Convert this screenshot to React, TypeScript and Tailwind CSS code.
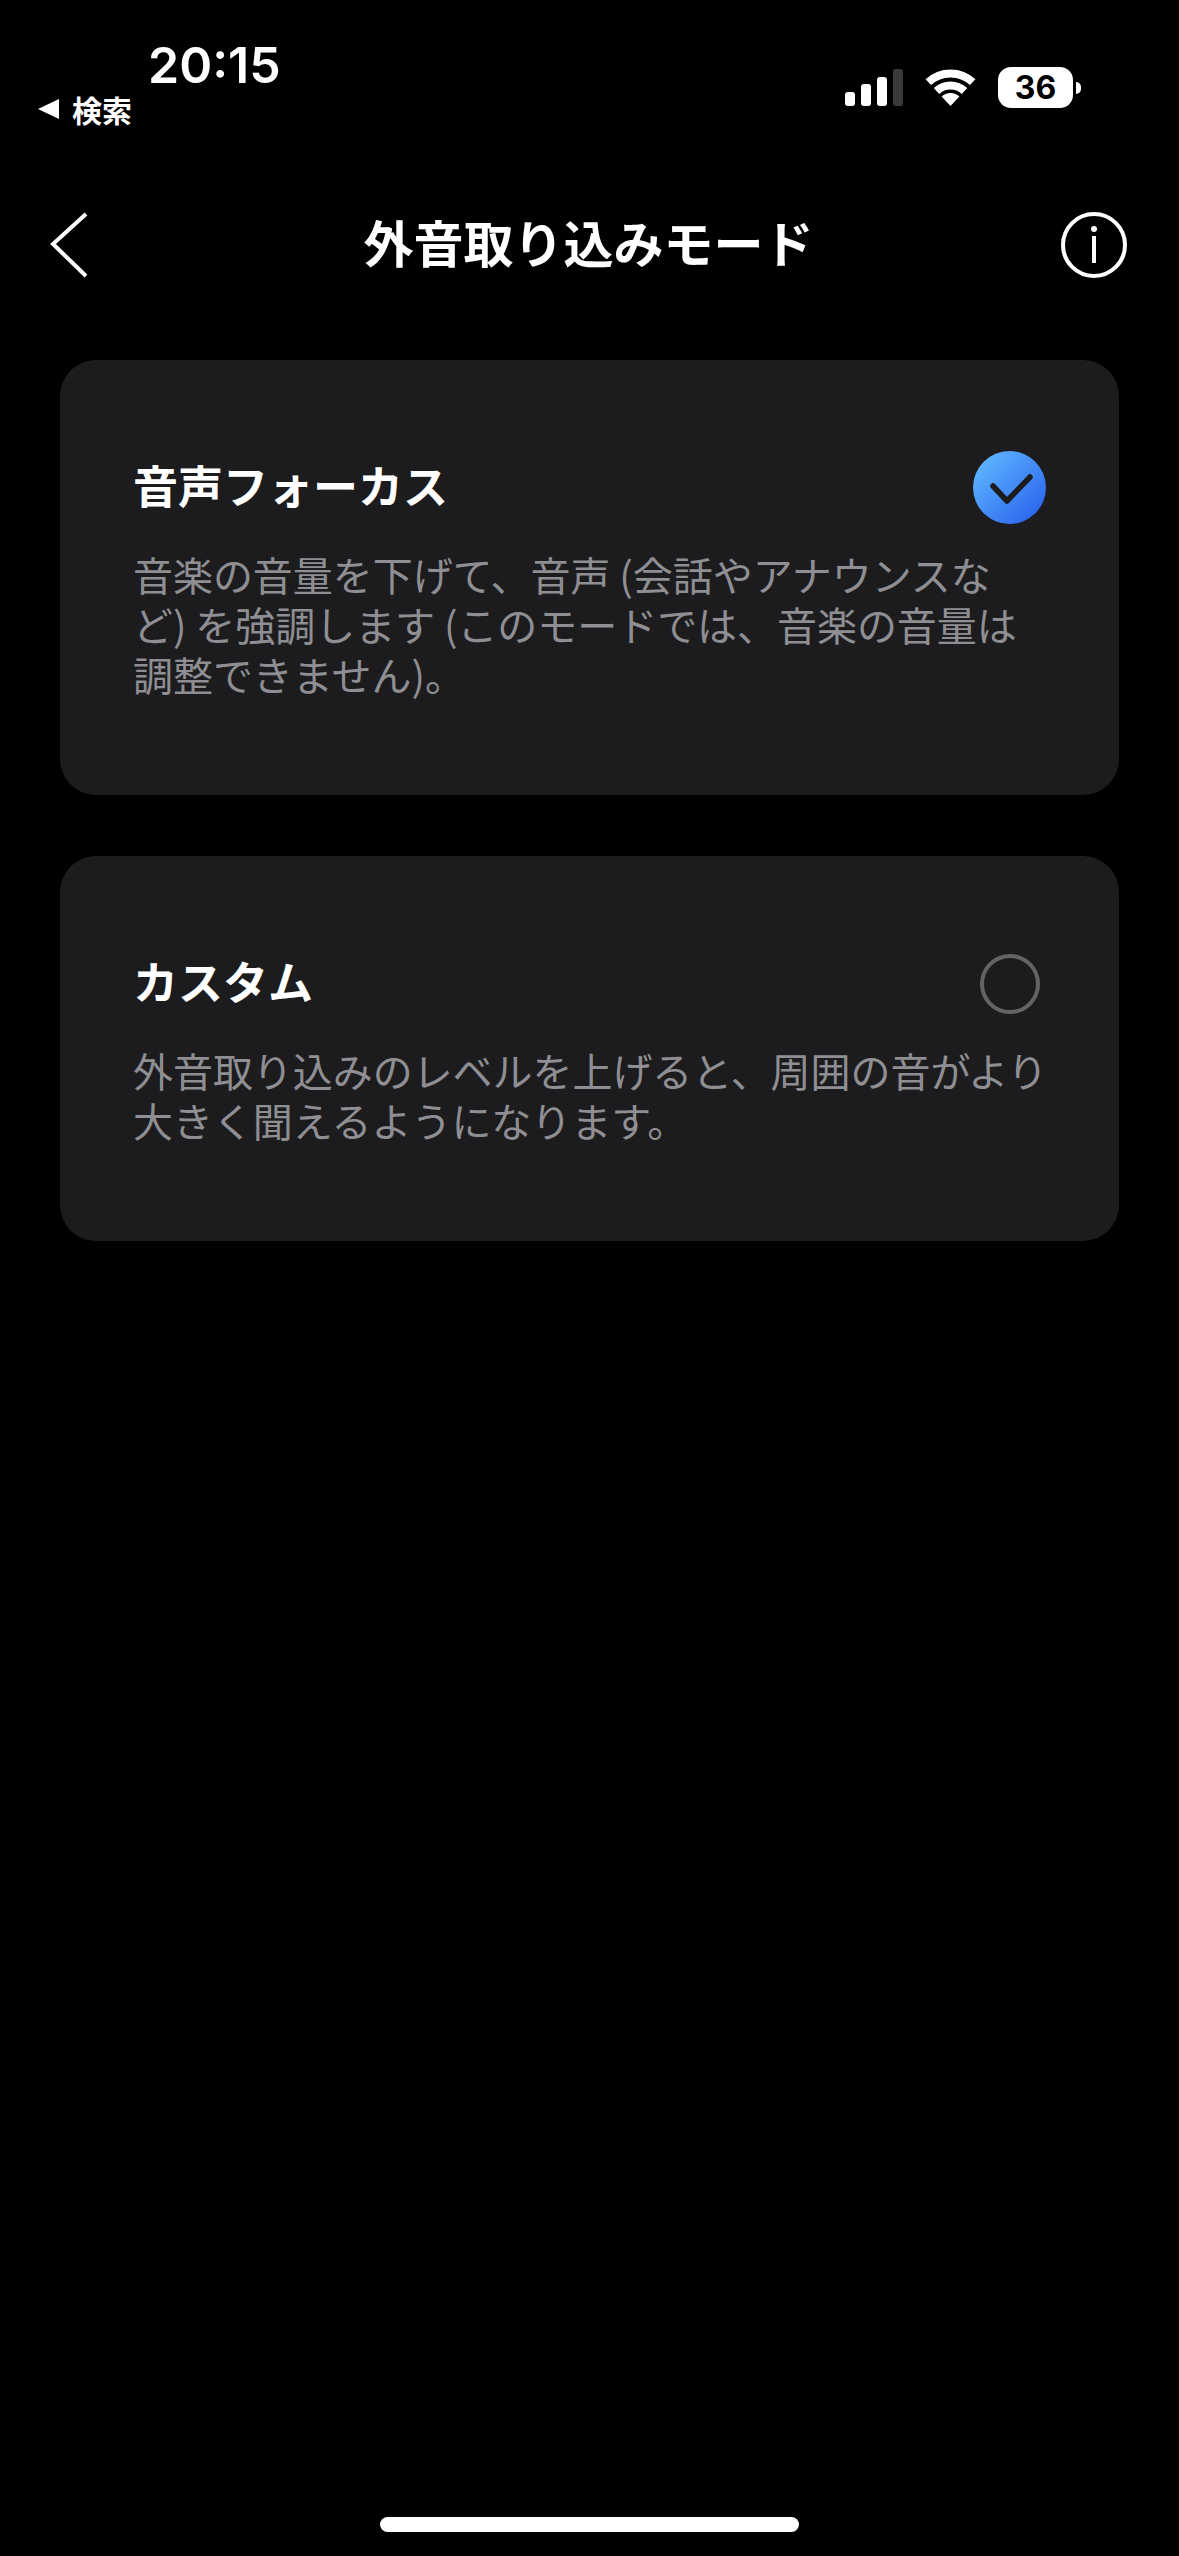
const SignalBars = () => (
  <div className="flex items-end gap-[6px] h-[37px]">
    <div className="w-[10px] h-[14px] rounded-[3px] bg-white" />
    <div className="w-[10px] h-[22px] rounded-[3px] bg-white" />
    <div className="w-[10px] h-[29px] rounded-[3px] bg-white" />
    <div className="w-[10px] h-[37px] rounded-[3px] bg-[#3a3a3c]" />
  </div>
)

const Wifi = () => (
  <svg width="51" height="37" viewBox="0 0 51 37" fill="none">
    <path d="M3.3 13.2A32.5 32.5 0 0 1 47.7 13.2" stroke="#fff" strokeWidth="8" />
    <path d="M11.5 22A20.5 20.5 0 0 1 39.5 22" stroke="#fff" strokeWidth="8" />
    <path d="M25.5 37L16.6 27.5A13 13 0 0 1 34.4 27.5Z" fill="#fff" />
  </svg>
)

const Battery = () => (
  <div className="flex items-center gap-[3px]">
    <div className="w-[75px] h-[41px] rounded-[13px] bg-white flex items-center justify-center text-black text-[32px] font-bold font-['Inter',sans-serif] leading-none">
      36
    </div>
    <div className="w-[5px] h-[12px] rounded-r-full bg-white" />
  </div>
)

const StatusBar = () => (
  <div className="h-[212px] flex justify-between">
    <div className="pl-[38px] pt-[36px] flex flex-col">
      <div className="pl-[110px] text-[50px] leading-[58px] font-semibold font-['Inter',sans-serif]">
        20:15
      </div>
      <div className="flex items-center gap-[13px] h-[30px]">
        <div className="w-0 h-0 border-y-[10px] border-y-transparent border-r-[21px] border-r-white" />
        <span className="text-[30px] leading-[30px] font-semibold">検索</span>
      </div>
    </div>
    <div className="pt-[67px] pr-[98px] flex items-start gap-[22px]">
      <div className="pt-[2px]">
        <SignalBars />
      </div>
      <div className="pt-[2px]">
        <Wifi />
      </div>
      <Battery />
    </div>
  </div>
)

const NavBar = () => (
  <div className="h-[66px] pl-[50px] pr-[52px] flex items-center justify-between">
    <div className="w-[100px]">
      <svg width="38" height="66" viewBox="0 0 38 66" fill="none">
        <path d="M36 2L3 32L36 64" stroke="#fff" strokeWidth="4" />
      </svg>
    </div>
    <div className="text-[50px] leading-[58px] font-semibold pb-[8px]">外音取り込みモード</div>
    <div className="w-[100px] flex justify-end">
      <svg width="66" height="66" viewBox="0 0 66 66" fill="none">
        <circle cx="33" cy="33" r="31" stroke="#fff" strokeWidth="4" />
        <circle cx="33" cy="17" r="3" fill="#fff" />
        <path d="M33 24V51" stroke="#fff" strokeWidth="4" />
      </svg>
    </div>
  </div>
)

type ModeCardProps = {
  title: string
  lines: string[]
  selected?: boolean
}

const ModeCard = ({ title, lines, selected }: ModeCardProps) => (
  <div className="rounded-[36px] bg-[#1c1c1e] pl-[73px] pr-[73px] pt-[91px] pb-[96px]">
    <div className="h-[73px] flex items-center justify-between">
      <div className="text-[45px] leading-[60px] font-bold pb-[6px]">{title}</div>
      {selected ? (
        <svg width="73" height="73" viewBox="0 0 73 73" fill="none">
          <defs>
            <linearGradient id="check-fill" x1="10" y1="10" x2="63" y2="63" gradientUnits="userSpaceOnUse">
              <stop offset="0" stopColor="#5cb2ff" />
              <stop offset="1" stopColor="#2d68ee" />
            </linearGradient>
          </defs>
          <circle cx="36.5" cy="36.5" r="36.5" fill="url(#check-fill)" />
          <path d="M20 35L34 50L57 26" stroke="#1c1c1e" strokeWidth="5.5" strokeLinecap="round" strokeLinejoin="round" />
        </svg>
      ) : (
        <div className="w-[73px] flex justify-center">
          <div className="w-[60px] h-[60px] rounded-full border-[4px] border-[#636366]" />
        </div>
      )}
    </div>
    <div className="mt-[25px] text-[40px] leading-[50px] tracking-[-0.05px] text-[#8e8e93]">
      {lines.map((line) => (
        <div key={line} className="whitespace-nowrap">
          {line}
        </div>
      ))}
    </div>
  </div>
)

export default function App() {
  return (
    <div className="w-[1179px] h-[2556px] bg-black text-white flex flex-col font-['Noto_Sans_CJK_JP',sans-serif]">
      <StatusBar />
      <NavBar />
      <div className="mt-[82px] mx-[60px] flex flex-col gap-[61px]">
        <ModeCard
          title="音声フォーカス"
          lines={[
            '音楽の音量を下げて、音声 (会話やアナウンスな',
            'ど) を強調します (このモードでは、音楽の音量は',
            '調整できません)。',
          ]}
          selected
        />
        <ModeCard
          title="カスタム"
          lines={['外音取り込みのレベルを上げると、周囲の音がより', '大きく聞えるようになります。']}
        />
      </div>
      <div className="mt-auto mb-[24px] mx-auto w-[419px] h-[15px] rounded-full bg-white" />
    </div>
  )
}
